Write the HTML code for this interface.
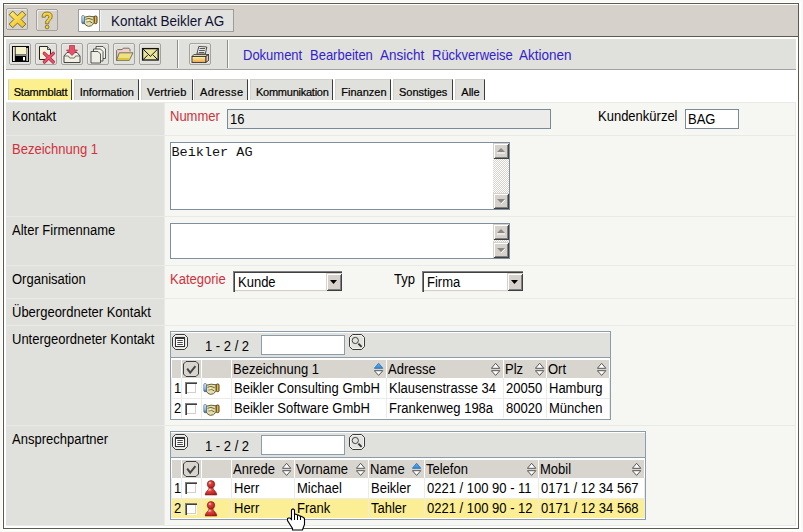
<!DOCTYPE html>
<html><head><meta charset="utf-8"><style>
html,body{margin:0;padding:0;}
body{width:803px;height:532px;position:relative;overflow:hidden;background:#f9f9f9;font-family:"Liberation Sans", sans-serif;}
div{box-sizing:content-box;}
</style></head><body>
<div style="position:absolute;left:2px;top:2px;width:799px;height:529px;background:#fff"></div>
<div style="position:absolute;left:3px;top:3px;width:794px;height:524px;border:1px solid #5d5b4b;background:#fff"></div>
<div style="position:absolute;left:4px;top:5px;width:794px;height:31px;background:#d6d2cb"></div>
<div style="position:absolute;left:4px;top:36px;width:794px;height:1px;background:#5d5b4b"></div>
<div style="position:absolute;left:6px;top:8px;width:20px;height:20px;border:1px solid #a4a29c;border-radius:2px;box-shadow:inset 1px 1px 0 #ecebe8"><svg width="22" height="22" style="position:absolute;left:-1px;top:-1px" viewBox="0 0 22 22"><defs><linearGradient id="xg" x1="0" y1="0" x2="1" y2="1"><stop offset="0" stop-color="#fcec70"/><stop offset="1" stop-color="#eec020"/></linearGradient></defs><path d="M3.2 6.7 L6.8 3.1 L11.5 7.8 L16.2 3.1 L19.8 6.7 L15.1 11.4 L19.8 16.1 L16.2 19.7 L11.5 15 L6.8 19.7 L3.2 16.1 L7.9 11.4 Z" fill="url(#xg)" stroke="#6a5a28" stroke-width="0.9" stroke-linejoin="round"/></svg></div>
<div style="position:absolute;left:36px;top:9px;width:20px;height:20px;border:1px solid #a4a29c;border-radius:2px;box-shadow:inset 1px 1px 0 #ecebe8"><svg width="22" height="22" style="position:absolute;left:-1px;top:-1px" viewBox="0 0 22 22"><path d="M6 8.2 Q6 3 11 3 Q16.2 3 16.2 7.5 Q16.2 10.3 13.6 11.8 Q12.7 12.4 12.7 14.8 L9.5 14.8 Q9.3 11.5 11.3 10.2 Q12.9 9.2 12.9 7.8 Q12.9 6.2 11 6.2 Q9.2 6.2 9.2 8.2 Z" fill="#f5d23a" stroke="#6e6330" stroke-width="0.8" stroke-linejoin="round"/><circle cx="11.1" cy="18" r="1.9" fill="#f5d23a" stroke="#6e6330" stroke-width="0.8"/></svg></div>
<div style="position:absolute;left:78px;top:9px;width:154px;height:21px;border:1px solid #9c9c9a;background:#e2e2e0"></div>
<div style="position:absolute;left:79px;top:10px;width:20px;height:21px;background:#fff;border-right:1px solid #9c9c9a"></div>
<div style="position:absolute;left:100px;top:10px;width:1px;height:21px;background:#f4f4f2"></div>
<div style="position:absolute;left:110.5px;top:12.96px;font-size:14.54px;line-height:17px;color:#101030;white-space:nowrap;transform:scaleX(0.9286);transform-origin:0 0;">Kontakt Beikler AG</div>
<div style="position:absolute;left:6px;top:39px;width:790px;height:30px;background:#e0e0dc;border-bottom:1px solid #a3a3a0"></div>
<div style="position:absolute;left:9px;top:43px;width:20px;height:20px;border:1px solid #a4a29c;border-radius:2px;box-shadow:inset 1px 1px 0 #ecebe8"><svg width="22" height="22" style="position:absolute;left:-1px;top:-1px" viewBox="0 0 22 22"><defs><linearGradient id="pg" x1="0" y1="0" x2="0" y2="1"><stop offset="0" stop-color="#fafaa0"/><stop offset="1" stop-color="#f0a050"/></linearGradient></defs><rect x="3" y="3" width="17" height="16" fill="#080808"/><rect x="4" y="4" width="1.8" height="14" fill="#efe6dc"/><rect x="17.4" y="5" width="1.4" height="13" fill="#efe6dc"/><rect x="6.6" y="4" width="10.4" height="7.4" fill="#f6f2c8"/><rect x="6.6" y="11.4" width="10.4" height="1.6" fill="#8a8a86"/><rect x="6.6" y="13" width="10.4" height="5" fill="#000"/><rect x="14" y="14" width="2" height="3.4" fill="#fff"/></svg></div>
<div style="position:absolute;left:35px;top:43px;width:20px;height:20px;border:1px solid #a4a29c;border-radius:2px;box-shadow:inset 1px 1px 0 #ecebe8"><svg width="22" height="22" style="position:absolute;left:-1px;top:-1px" viewBox="0 0 22 22"><defs><linearGradient id="pg" x1="0" y1="0" x2="0" y2="1"><stop offset="0" stop-color="#fafaa0"/><stop offset="1" stop-color="#f0a050"/></linearGradient></defs><path d="M4.5 3.5 H12.5 L15.5 6.5 V16.5 H4.5 Z" fill="#f4f2d8" stroke="#222" stroke-width="1"/><path d="M12.5 3.5 V6.5 H15.5" fill="#ccc" stroke="#222" stroke-width="0.8"/><path d="M9.3 10.3 L18.3 19 M18.3 10.3 L9.3 19" stroke="#a02030" stroke-width="3.2" stroke-linecap="round"/><path d="M9.3 10.3 L18.3 19 M18.3 10.3 L9.3 19" stroke="#f05070" stroke-width="2" stroke-linecap="round"/></svg></div>
<div style="position:absolute;left:61px;top:43px;width:20px;height:20px;border:1px solid #a4a29c;border-radius:2px;box-shadow:inset 1px 1px 0 #ecebe8"><svg width="22" height="22" style="position:absolute;left:-1px;top:-1px" viewBox="0 0 22 22"><defs><linearGradient id="pg" x1="0" y1="0" x2="0" y2="1"><stop offset="0" stop-color="#fafaa0"/><stop offset="1" stop-color="#f0a050"/></linearGradient></defs><path d="M3 13 L6 9.5 H16 L19 13 V19.5 H3 Z" fill="#f2f0e2" stroke="#333" stroke-width="0.9"/><path d="M3 13 H7.5 L8.5 15 H13.5 L14.5 13 H19" fill="none" stroke="#555" stroke-width="0.8"/><path d="M8.5 2.5 H13.5 V7 H16.5 L11 12.5 L5.5 7 H8.5 Z" fill="#e8506a" stroke="#a03040" stroke-width="0.7"/></svg></div>
<div style="position:absolute;left:87px;top:43px;width:20px;height:20px;border:1px solid #a4a29c;border-radius:2px;box-shadow:inset 1px 1px 0 #ecebe8"><svg width="22" height="22" style="position:absolute;left:-1px;top:-1px" viewBox="0 0 22 22"><defs><linearGradient id="pg" x1="0" y1="0" x2="0" y2="1"><stop offset="0" stop-color="#fafaa0"/><stop offset="1" stop-color="#f0a050"/></linearGradient></defs><path d="M9 3.5 H16 L18.5 6 V15.5 H9 Z" fill="#f2f2ea" stroke="#333" stroke-width="0.8"/><path d="M6.5 6 H13.5 L16 8.5 V18 H6.5 Z" fill="#f2f2ea" stroke="#333" stroke-width="0.8"/><path d="M4 8.5 H11 L13.5 11 V20 H4 Z" fill="#eeeee4" stroke="#333" stroke-width="0.8"/></svg></div>
<div style="position:absolute;left:113px;top:43px;width:20px;height:20px;border:1px solid #a4a29c;border-radius:2px;box-shadow:inset 1px 1px 0 #ecebe8"><svg width="22" height="22" style="position:absolute;left:-1px;top:-1px" viewBox="0 0 22 22"><defs><linearGradient id="pg" x1="0" y1="0" x2="0" y2="1"><stop offset="0" stop-color="#fafaa0"/><stop offset="1" stop-color="#f0a050"/></linearGradient></defs><path d="M3.6 17.5 V7.6 L4.6 6.6 H9.2 L10.2 5.2 H16 L17 6.6 V8.5" fill="#f2d0c8" stroke="#555" stroke-width="0.8"/><path d="M3.6 17.5 L6.2 9.8 H20 L16.2 17.5 Z" fill="#eee27e" stroke="#555" stroke-width="0.8"/><path d="M4.8 15.5 H16.8 M5.2 16.6 H16.3" stroke="#d8c440" stroke-width="1.2"/></svg></div>
<div style="position:absolute;left:139px;top:43px;width:20px;height:20px;border:1px solid #a4a29c;border-radius:2px;box-shadow:inset 1px 1px 0 #ecebe8"><svg width="22" height="22" style="position:absolute;left:-1px;top:-1px" viewBox="0 0 22 22"><defs><linearGradient id="pg" x1="0" y1="0" x2="0" y2="1"><stop offset="0" stop-color="#fafaa0"/><stop offset="1" stop-color="#f0a050"/></linearGradient></defs><rect x="3.6" y="5.6" width="15.6" height="11.4" fill="#e9e59c" stroke="#111" stroke-width="1.3"/><path d="M4.2 6.2 L11.4 13.3 L18.6 6.2 M4.2 16.6 L8.6 12.2 M18.6 16.6 L14.2 12.2" fill="none" stroke="#111" stroke-width="1"/></svg></div>
<div style="position:absolute;left:189px;top:43px;width:20px;height:20px;border:1px solid #a4a29c;border-radius:2px;box-shadow:inset 1px 1px 0 #ecebe8"><svg width="22" height="22" style="position:absolute;left:-1px;top:-1px" viewBox="0 0 22 22"><defs><linearGradient id="pg" x1="0" y1="0" x2="0" y2="1"><stop offset="0" stop-color="#fafaa0"/><stop offset="1" stop-color="#f0a050"/></linearGradient></defs><path d="M9.8 3.5 L17.8 4 L16.3 11 L7.9 11 Z" fill="#f8f8f8" stroke="#222" stroke-width="0.8"/><path d="M10.5 5.6 H16.2 M10.1 7.6 H15.8 M9.7 9.6 H15.4" stroke="#333" stroke-width="0.9"/><path d="M3 13.4 L5 11.5 H19.5 L16.8 13.4 Z" fill="#e8e0c8" stroke="#222" stroke-width="0.7"/><path d="M16.8 13.4 L19.5 11.5 V17.5 L16.8 19.4 Z" fill="#e8c0b8" stroke="#222" stroke-width="0.8"/><rect x="3" y="13.4" width="13.8" height="6" fill="url(#pg)" stroke="#222" stroke-width="0.8"/></svg></div>
<div style="position:absolute;left:177px;top:40px;width:1px;height:28px;background:#8e8e8a"></div>
<div style="position:absolute;left:178px;top:40px;width:1px;height:28px;background:#fbfbfa"></div>
<div style="position:absolute;left:227px;top:40px;width:1px;height:28px;background:#8e8e8a"></div>
<div style="position:absolute;left:228px;top:40px;width:1px;height:28px;background:#fbfbfa"></div>
<div style="position:absolute;left:242.5px;top:46.68px;font-size:14.20px;line-height:16px;color:#3322cc;white-space:nowrap;transform:scaleX(0.9155);transform-origin:0 0;">Dokument</div>
<div style="position:absolute;left:309.6px;top:46.68px;font-size:14.20px;line-height:16px;color:#3322cc;white-space:nowrap;transform:scaleX(0.9155);transform-origin:0 0;">Bearbeiten</div>
<div style="position:absolute;left:380px;top:46.68px;font-size:14.20px;line-height:16px;color:#3322cc;white-space:nowrap;transform:scaleX(0.9507);transform-origin:0 0;">Ansicht</div>
<div style="position:absolute;left:431.5px;top:46.68px;font-size:14.20px;line-height:16px;color:#3322cc;white-space:nowrap;transform:scaleX(0.9155);transform-origin:0 0;">R&uuml;ckverweise</div>
<div style="position:absolute;left:519px;top:46.68px;font-size:14.20px;line-height:16px;color:#3322cc;white-space:nowrap;transform:scaleX(0.9507);transform-origin:0 0;">Aktionen</div>
<div style="position:absolute;left:8px;top:79px;width:62px;height:20px;background:#fbef8e;border-top:1px solid #fbef8e;border-left:1px solid #d4d2cc;border-right:1px solid #3c3c3c"></div>
<div style="position:absolute;left:13.7px;top:85.69px;font-size:11.00px;line-height:13px;color:#000;white-space:nowrap;letter-spacing:-0.2px;-webkit-text-stroke:0.2px #000">Stammblatt</div>
<div style="position:absolute;left:74px;top:79px;width:63px;height:20px;background:#e0e0dc;border-top:1px solid #d2d0ca;border-left:1px solid #d4d2cc;border-right:1px solid #3c3c3c"></div>
<div style="position:absolute;left:79.8px;top:85.69px;font-size:11.00px;line-height:13px;color:#000;white-space:nowrap;letter-spacing:-0.1px;-webkit-text-stroke:0.2px #000">Information</div>
<div style="position:absolute;left:141px;top:79px;width:50px;height:20px;background:#e0e0dc;border-top:1px solid #d2d0ca;border-left:1px solid #d4d2cc;border-right:1px solid #3c3c3c"></div>
<div style="position:absolute;left:147px;top:85.69px;font-size:11.00px;line-height:13px;color:#000;white-space:nowrap;letter-spacing:0.2px;-webkit-text-stroke:0.2px #000">Vertrieb</div>
<div style="position:absolute;left:194px;top:79px;width:52px;height:20px;background:#e0e0dc;border-top:1px solid #d2d0ca;border-left:1px solid #d4d2cc;border-right:1px solid #3c3c3c"></div>
<div style="position:absolute;left:200px;top:85.69px;font-size:11.00px;line-height:13px;color:#000;white-space:nowrap;letter-spacing:0.45px;-webkit-text-stroke:0.2px #000">Adresse</div>
<div style="position:absolute;left:250px;top:79px;width:81px;height:20px;background:#e0e0dc;border-top:1px solid #d2d0ca;border-left:1px solid #d4d2cc;border-right:1px solid #3c3c3c"></div>
<div style="position:absolute;left:256px;top:85.69px;font-size:11.00px;line-height:13px;color:#000;white-space:nowrap;letter-spacing:-0.25px;-webkit-text-stroke:0.2px #000">Kommunikation</div>
<div style="position:absolute;left:335px;top:79px;width:54px;height:20px;background:#e0e0dc;border-top:1px solid #d2d0ca;border-left:1px solid #d4d2cc;border-right:1px solid #3c3c3c"></div>
<div style="position:absolute;left:341.3px;top:85.69px;font-size:11.00px;line-height:13px;color:#000;white-space:nowrap;letter-spacing:0px;-webkit-text-stroke:0.2px #000">Finanzen</div>
<div style="position:absolute;left:393px;top:79px;width:58px;height:20px;background:#e0e0dc;border-top:1px solid #d2d0ca;border-left:1px solid #d4d2cc;border-right:1px solid #3c3c3c"></div>
<div style="position:absolute;left:399px;top:85.69px;font-size:11.00px;line-height:13px;color:#000;white-space:nowrap;letter-spacing:0px;-webkit-text-stroke:0.2px #000">Sonstiges</div>
<div style="position:absolute;left:455px;top:79px;width:28px;height:20px;background:#e0e0dc;border-top:1px solid #d2d0ca;border-left:1px solid #d4d2cc;border-right:1px solid #3c3c3c"></div>
<div style="position:absolute;left:461.3px;top:85.69px;font-size:11.00px;line-height:13px;color:#000;white-space:nowrap;letter-spacing:0px;-webkit-text-stroke:0.2px #000">Alle</div>
<div style="position:absolute;left:6px;top:102px;width:790px;height:424px;background:#e9e9e5"></div>
<div style="position:absolute;left:6px;top:103px;width:158px;height:32px;background:#e0e0dc"></div>
<div style="position:absolute;left:165px;top:103px;width:630px;height:32px;background:#f6f6f2"></div>
<div style="position:absolute;left:6px;top:136px;width:158px;height:80px;background:#e0e0dc"></div>
<div style="position:absolute;left:165px;top:136px;width:630px;height:80px;background:#f6f6f2"></div>
<div style="position:absolute;left:6px;top:217px;width:158px;height:48px;background:#e0e0dc"></div>
<div style="position:absolute;left:165px;top:217px;width:630px;height:48px;background:#f6f6f2"></div>
<div style="position:absolute;left:6px;top:266px;width:158px;height:32px;background:#e0e0dc"></div>
<div style="position:absolute;left:165px;top:266px;width:630px;height:32px;background:#f6f6f2"></div>
<div style="position:absolute;left:6px;top:299px;width:158px;height:26px;background:#e0e0dc"></div>
<div style="position:absolute;left:165px;top:299px;width:630px;height:26px;background:#f6f6f2"></div>
<div style="position:absolute;left:6px;top:326px;width:158px;height:99px;background:#e0e0dc"></div>
<div style="position:absolute;left:165px;top:326px;width:630px;height:99px;background:#f6f6f2"></div>
<div style="position:absolute;left:6px;top:426px;width:158px;height:99px;background:#e0e0dc"></div>
<div style="position:absolute;left:165px;top:426px;width:630px;height:99px;background:#f6f6f2"></div>
<div style="position:absolute;left:12px;top:108.15px;font-size:14.00px;line-height:16px;color:#000;white-space:nowrap;transform:scaleX(0.9286);transform-origin:0 0;">Kontakt</div>
<div style="position:absolute;left:12px;top:141.15px;font-size:14.00px;line-height:16px;color:#d0323c;white-space:nowrap;transform:scaleX(0.9286);transform-origin:0 0;">Bezeichnung 1</div>
<div style="position:absolute;left:12px;top:222.15px;font-size:14.00px;line-height:16px;color:#000;white-space:nowrap;transform:scaleX(0.9286);transform-origin:0 0;">Alter Firmenname</div>
<div style="position:absolute;left:12px;top:271.15px;font-size:14.00px;line-height:16px;color:#000;white-space:nowrap;transform:scaleX(0.9286);transform-origin:0 0;">Organisation</div>
<div style="position:absolute;left:12px;top:304.15px;font-size:14.00px;line-height:16px;color:#000;white-space:nowrap;transform:scaleX(0.9286);transform-origin:0 0;">&Uuml;bergeordneter Kontakt</div>
<div style="position:absolute;left:12px;top:331.15px;font-size:14.00px;line-height:16px;color:#000;white-space:nowrap;transform:scaleX(0.9286);transform-origin:0 0;">Untergeordneter Kontakt</div>
<div style="position:absolute;left:12px;top:431.15px;font-size:14.00px;line-height:16px;color:#000;white-space:nowrap;transform:scaleX(0.9286);transform-origin:0 0;">Ansprechpartner</div>
<div style="position:absolute;left:170.3px;top:108.15px;font-size:14.00px;line-height:16px;color:#d0323c;white-space:nowrap;transform:scaleX(0.9286);transform-origin:0 0;">Nummer</div>
<div style="position:absolute;left:227px;top:109px;width:322px;height:18px;border:1px solid #7b8a99;background:#ececea"></div>
<div style="position:absolute;left:230px;top:111.15px;font-size:14.00px;line-height:16px;color:#000;white-space:nowrap;transform:scaleX(0.9286);transform-origin:0 0;">16</div>
<div style="position:absolute;left:598px;top:108.15px;font-size:14.00px;line-height:16px;color:#000;white-space:nowrap;transform:scaleX(0.9286);transform-origin:0 0;">Kundenk&uuml;rzel</div>
<div style="position:absolute;left:685px;top:109px;width:52px;height:18px;border:1px solid #7b8a99;background:#fff"></div>
<div style="position:absolute;left:688px;top:111.15px;font-size:14.00px;line-height:16px;color:#000;white-space:nowrap;transform:scaleX(0.9286);transform-origin:0 0;">BAG</div>
<div style="position:absolute;left:170px;top:142px;width:338px;height:66px;border:1px solid #7f8f9f;background:#fff"></div>
<div style="position:absolute;left:493px;top:143px;width:16px;height:66px;background-color:#eae8e4;background-image:repeating-conic-gradient(#d6d2cb 0 25%, #fff 0 50%);background-size:2px 2px"></div>
<div style="position:absolute;left:493px;top:143px;width:16px;height:16px;background:#d6d2cb;box-shadow:inset 1px 1px 0 #d6d2cb, inset -1px -1px 0 #404040, inset 2px 2px 0 #fff, inset -2px -2px 0 #808080"><svg width="16" height="16" style="position:absolute;left:0;top:0"><path d="M4 9 L8 5 L12 9 Z" fill="#8a8884"/><path d="M4 10 H12" stroke="#fff"/></svg></div>
<div style="position:absolute;left:493px;top:193px;width:16px;height:16px;background:#d6d2cb;box-shadow:inset 1px 1px 0 #d6d2cb, inset -1px -1px 0 #404040, inset 2px 2px 0 #fff, inset -2px -2px 0 #808080"><svg width="16" height="16" style="position:absolute;left:0;top:0"><path d="M4 6 L8 10 L12 6 Z" fill="#8a8884"/><path d="M8 11 L12 7" stroke="#fff"/></svg></div>
<div style="position:absolute;left:171.5px;top:145.20px;font-family:'Liberation Mono',monospace;font-size:13.5px;line-height:16px;color:#111;white-space:nowrap">Beikler AG</div>
<div style="position:absolute;left:170px;top:223px;width:338px;height:34px;border:1px solid #7f8f9f;background:#fff"></div>
<div style="position:absolute;left:493px;top:224px;width:16px;height:34px;background-color:#eae8e4;background-image:repeating-conic-gradient(#d6d2cb 0 25%, #fff 0 50%);background-size:2px 2px"></div>
<div style="position:absolute;left:493px;top:224px;width:16px;height:16px;background:#d6d2cb;box-shadow:inset 1px 1px 0 #d6d2cb, inset -1px -1px 0 #404040, inset 2px 2px 0 #fff, inset -2px -2px 0 #808080"><svg width="16" height="16" style="position:absolute;left:0;top:0"><path d="M4 9 L8 5 L12 9 Z" fill="#8a8884"/><path d="M4 10 H12" stroke="#fff"/></svg></div>
<div style="position:absolute;left:493px;top:242px;width:16px;height:16px;background:#d6d2cb;box-shadow:inset 1px 1px 0 #d6d2cb, inset -1px -1px 0 #404040, inset 2px 2px 0 #fff, inset -2px -2px 0 #808080"><svg width="16" height="16" style="position:absolute;left:0;top:0"><path d="M4 6 L8 10 L12 6 Z" fill="#8a8884"/><path d="M8 11 L12 7" stroke="#fff"/></svg></div>
<div style="position:absolute;left:170px;top:271.15px;font-size:14.00px;line-height:16px;color:#d0323c;white-space:nowrap;transform:scaleX(0.9286);transform-origin:0 0;">Kategorie</div>
<div style="position:absolute;left:233px;top:271px;width:109px;height:21px;background:#fff;box-shadow:inset 1px 1px 0 #808080, inset 2px 2px 0 #404040, inset 0 -1px 0 #f2f2f0, inset 0 -2px 0 #d4d0c8"></div>
<div style="position:absolute;left:326px;top:273px;width:16px;height:18px;background:#d6d2cb;box-shadow:inset 1px 1px 0 #d6d2cb, inset -1px -1px 0 #404040, inset 2px 2px 0 #fff, inset -2px -2px 0 #808080"><svg width="16" height="19" style="position:absolute;left:0;top:0"><path d="M4 7 L11 7 L7.5 11 Z" fill="#000"/></svg></div>
<div style="position:absolute;left:238px;top:274.15px;font-size:14.00px;line-height:16px;color:#000;white-space:nowrap;transform:scaleX(0.9286);transform-origin:0 0;">Kunde</div>
<div style="position:absolute;left:393.5px;top:271.15px;font-size:14.00px;line-height:16px;color:#000;white-space:nowrap;transform:scaleX(0.9286);transform-origin:0 0;">Typ</div>
<div style="position:absolute;left:422px;top:271px;width:101px;height:21px;background:#fff;box-shadow:inset 1px 1px 0 #808080, inset 2px 2px 0 #404040, inset 0 -1px 0 #f2f2f0, inset 0 -2px 0 #d4d0c8"></div>
<div style="position:absolute;left:507px;top:273px;width:16px;height:18px;background:#d6d2cb;box-shadow:inset 1px 1px 0 #d6d2cb, inset -1px -1px 0 #404040, inset 2px 2px 0 #fff, inset -2px -2px 0 #808080"><svg width="16" height="19" style="position:absolute;left:0;top:0"><path d="M4 7 L11 7 L7.5 11 Z" fill="#000"/></svg></div>
<div style="position:absolute;left:427px;top:274.15px;font-size:14.00px;line-height:16px;color:#000;white-space:nowrap;transform:scaleX(0.9286);transform-origin:0 0;">Firma</div>
<div style="position:absolute;left:80.5px;top:14.5px;line-height:0"><svg width="17" height="12" viewBox="0 0 17 12"><defs><linearGradient id="hb" x1="0" y1="0" x2="0" y2="1"><stop offset="0" stop-color="#e0f4ff"/><stop offset="0.65" stop-color="#88c4f0"/><stop offset="1" stop-color="#3060b8"/></linearGradient></defs><path d="M3 2.3 Q8 0.3 13.2 1.8 L13.4 7.8 Q10.5 11.8 7.5 11.4 Q4.5 11 3 7.8 Z" fill="#e4deae" stroke="#55502a" stroke-width="0.9"/><path d="M4.5 4.3 Q8 2.3 11.8 4.8 M5.5 7 Q8.5 5.3 11.5 8" stroke="#6e6630" stroke-width="1" fill="none"/><circle cx="7" cy="5.5" r="1" fill="#f8f4c0"/><rect x="0.8" y="0.5" width="2.6" height="8.2" rx="1.1" fill="url(#hb)" stroke="#404a70" stroke-width="0.6"/><rect x="13.2" y="1" width="2.8" height="7.6" rx="1.1" fill="#eab444" stroke="#3a3010" stroke-width="0.9"/></svg></div>
<div style="position:absolute;left:170px;top:331px;width:439px;height:87px;border:1px solid #8d9cab;background:#fff"></div>
<div style="position:absolute;left:171px;top:333px;width:439px;height:24px;background:#e0e0dc;border-bottom:1px solid #8d9cab"></div>
<svg style="position:absolute;left:172px;top:334px" width="16" height="16" viewBox="0 0 16 16"><path d="M3.5 0.5 H12.5 L15.5 3.5 V12.5 L12.5 15.5 H3.5 L0.5 12.5 V3.5 Z" fill="#e2e2de" stroke="#3c3c3c" stroke-width="1"/><path d="M3.9 1.5 H12.1 L14.5 3.9 V12.1 L12.1 14.5 H3.9 L1.5 12.1 V3.9 Z" fill="none" stroke="#f4f4f2" stroke-width="0.9"/><rect x="3.5" y="3.5" width="9" height="9" fill="#fff" stroke="#333" stroke-width="1"/><rect x="3" y="3" width="10" height="2" fill="#333"/><path d="M5.3 6.5 H10.8 M5.3 8.5 H10.8 M5.3 10.5 H10.8" stroke="#333" stroke-width="0.9"/></svg>
<div style="position:absolute;left:204.8px;top:338.15px;font-size:14.00px;line-height:16px;color:#000;white-space:nowrap;transform:scaleX(0.9286);transform-origin:0 0;">1 - 2 / 2</div>
<div style="position:absolute;left:261px;top:335px;width:82px;height:18px;border:1px solid #8d9cab;background:#fff"></div>
<svg style="position:absolute;left:349px;top:334px" width="16" height="16" viewBox="0 0 16 16"><path d="M3.5 0.5 H12.5 L15.5 3.5 V12.5 L12.5 15.5 H3.5 L0.5 12.5 V3.5 Z" fill="#e2e2de" stroke="#3c3c3c" stroke-width="1"/><path d="M3.9 1.5 H12.1 L14.5 3.9 V12.1 L12.1 14.5 H3.9 L1.5 12.1 V3.9 Z" fill="none" stroke="#f4f4f2" stroke-width="0.9"/><circle cx="6.3" cy="6.5" r="3.1" fill="none" stroke="#333" stroke-width="0.9"/><path d="M9.4 9.6 L12.6 12.8" stroke="#333" stroke-width="1.9"/></svg>
<div style="position:absolute;left:171px;top:359px;width:439px;height:19px;background:#fff"></div>
<div style="position:absolute;left:172px;top:360px;width:9px;height:18px;background:#d8d4ce"></div>
<div style="position:absolute;left:182px;top:360px;width:19px;height:18px;background:#d8d4ce"></div>
<div style="position:absolute;left:202px;top:360px;width:29px;height:18px;background:#d8d4ce"></div>
<div style="position:absolute;left:232px;top:360px;width:154px;height:18px;background:#d8d4ce"></div>
<div style="position:absolute;left:232.8px;top:360.65px;font-size:14.00px;line-height:16px;color:#000;white-space:nowrap;transform:scaleX(0.9286);transform-origin:0 0;">Bezeichnung 1</div>
<svg style="position:absolute;left:374px;top:362px" width="11" height="15" viewBox="0 0 11 15"><defs><linearGradient id="sg" x1="0" y1="0" x2="0" y2="1"><stop offset="0" stop-color="#60b8f8"/><stop offset="1" stop-color="#2a88e0"/></linearGradient></defs><path d="M0.4 6.3 L4.6 1.3 L8.8 6.3 Z" fill="url(#sg)" stroke="#3a78b8" stroke-width="1" stroke-linejoin="round"/><path d="M0.4 8.7 L4.6 13.4 L8.8 8.7 Z" fill="#fff" stroke="#555" stroke-width="1" stroke-linejoin="round"/></svg>
<div style="position:absolute;left:387px;top:360px;width:116px;height:18px;background:#d8d4ce"></div>
<div style="position:absolute;left:387.8px;top:360.65px;font-size:14.00px;line-height:16px;color:#000;white-space:nowrap;transform:scaleX(0.9286);transform-origin:0 0;">Adresse</div>
<svg style="position:absolute;left:491px;top:362px" width="11" height="15" viewBox="0 0 11 15"><defs><linearGradient id="sg" x1="0" y1="0" x2="0" y2="1"><stop offset="0" stop-color="#60b8f8"/><stop offset="1" stop-color="#2a88e0"/></linearGradient></defs><path d="M0.4 6.3 L4.6 1.3 L8.8 6.3 Z" fill="#fff" stroke="#555" stroke-width="1" stroke-linejoin="round"/><path d="M0.4 8.7 L4.6 13.4 L8.8 8.7 Z" fill="#fff" stroke="#555" stroke-width="1" stroke-linejoin="round"/></svg>
<div style="position:absolute;left:504px;top:360px;width:42px;height:18px;background:#d8d4ce"></div>
<div style="position:absolute;left:504.8px;top:360.65px;font-size:14.00px;line-height:16px;color:#000;white-space:nowrap;transform:scaleX(0.9286);transform-origin:0 0;">Plz</div>
<svg style="position:absolute;left:535px;top:362px" width="11" height="15" viewBox="0 0 11 15"><defs><linearGradient id="sg" x1="0" y1="0" x2="0" y2="1"><stop offset="0" stop-color="#60b8f8"/><stop offset="1" stop-color="#2a88e0"/></linearGradient></defs><path d="M0.4 6.3 L4.6 1.3 L8.8 6.3 Z" fill="#fff" stroke="#555" stroke-width="1" stroke-linejoin="round"/><path d="M0.4 8.7 L4.6 13.4 L8.8 8.7 Z" fill="#fff" stroke="#555" stroke-width="1" stroke-linejoin="round"/></svg>
<div style="position:absolute;left:547px;top:360px;width:62px;height:18px;background:#d8d4ce"></div>
<div style="position:absolute;left:547.8px;top:360.65px;font-size:14.00px;line-height:16px;color:#000;white-space:nowrap;transform:scaleX(0.9286);transform-origin:0 0;">Ort</div>
<svg style="position:absolute;left:597px;top:362px" width="11" height="15" viewBox="0 0 11 15"><defs><linearGradient id="sg" x1="0" y1="0" x2="0" y2="1"><stop offset="0" stop-color="#60b8f8"/><stop offset="1" stop-color="#2a88e0"/></linearGradient></defs><path d="M0.4 6.3 L4.6 1.3 L8.8 6.3 Z" fill="#fff" stroke="#555" stroke-width="1" stroke-linejoin="round"/><path d="M0.4 8.7 L4.6 13.4 L8.8 8.7 Z" fill="#fff" stroke="#555" stroke-width="1" stroke-linejoin="round"/></svg>
<svg style="position:absolute;left:183px;top:361px" width="16" height="16" viewBox="0 0 16 16"><path d="M3 0.5 H13 L15.5 3 V13 L13 15.5 H3 L0.5 13 V3 Z" fill="#d8d4ce" stroke="#3c3c3c" stroke-width="1"/><path d="M4.2 7.6 L7.2 11.6 L12.4 5.2" fill="none" stroke="#444" stroke-width="1.9"/></svg>
<div style="position:absolute;left:171px;top:378px;width:439px;height:21px;background:#ebebea"></div>
<div style="position:absolute;left:172px;top:378px;width:9px;height:20px;background:#fff"></div>
<div style="position:absolute;left:182px;top:378px;width:19px;height:20px;background:#fff"></div>
<div style="position:absolute;left:202px;top:378px;width:29px;height:20px;background:#fff"></div>
<div style="position:absolute;left:232px;top:378px;width:154px;height:20px;background:#fff"></div>
<div style="position:absolute;left:387px;top:378px;width:116px;height:20px;background:#fff"></div>
<div style="position:absolute;left:504px;top:378px;width:42px;height:20px;background:#fff"></div>
<div style="position:absolute;left:547px;top:378px;width:62px;height:20px;background:#fff"></div>
<div style="position:absolute;left:174px;top:380.15px;font-size:14.00px;line-height:16px;color:#000;white-space:nowrap;transform:scaleX(0.9286);transform-origin:0 0;">1</div>
<div style="position:absolute;left:185px;top:382px;width:12px;height:12px;background:#fff;box-shadow:inset 1px 1px 0 #808080, inset 2px 2px 0 #404040, inset -1px -1px 0 #fff, inset -2px -2px 0 #d4d0c8"></div>
<div style="position:absolute;left:203px;top:383px;line-height:0"><svg width="17" height="12" viewBox="0 0 17 12"><defs><linearGradient id="hb" x1="0" y1="0" x2="0" y2="1"><stop offset="0" stop-color="#e0f4ff"/><stop offset="0.65" stop-color="#88c4f0"/><stop offset="1" stop-color="#3060b8"/></linearGradient></defs><path d="M3 2.3 Q8 0.3 13.2 1.8 L13.4 7.8 Q10.5 11.8 7.5 11.4 Q4.5 11 3 7.8 Z" fill="#e4deae" stroke="#55502a" stroke-width="0.9"/><path d="M4.5 4.3 Q8 2.3 11.8 4.8 M5.5 7 Q8.5 5.3 11.5 8" stroke="#6e6630" stroke-width="1" fill="none"/><circle cx="7" cy="5.5" r="1" fill="#f8f4c0"/><rect x="0.8" y="0.5" width="2.6" height="8.2" rx="1.1" fill="url(#hb)" stroke="#404a70" stroke-width="0.6"/><rect x="13.2" y="1" width="2.8" height="7.6" rx="1.1" fill="#eab444" stroke="#3a3010" stroke-width="0.9"/></svg></div>
<div style="position:absolute;left:234.4px;top:380.15px;font-size:14.00px;line-height:16px;color:#000;white-space:nowrap;transform:scaleX(0.9286);transform-origin:0 0;">Beikler Consulting GmbH</div>
<div style="position:absolute;left:389.4px;top:380.15px;font-size:14.00px;line-height:16px;color:#000;white-space:nowrap;transform:scaleX(0.9286);transform-origin:0 0;">Klausenstrasse 34</div>
<div style="position:absolute;left:506.4px;top:380.15px;font-size:14.00px;line-height:16px;color:#000;white-space:nowrap;transform:scaleX(0.9286);transform-origin:0 0;">20050</div>
<div style="position:absolute;left:549.4px;top:380.15px;font-size:14.00px;line-height:16px;color:#000;white-space:nowrap;transform:scaleX(0.9286);transform-origin:0 0;">Hamburg</div>
<div style="position:absolute;left:171px;top:399px;width:439px;height:19px;background:#ebebea"></div>
<div style="position:absolute;left:172px;top:399px;width:9px;height:19px;background:#fff"></div>
<div style="position:absolute;left:182px;top:399px;width:19px;height:19px;background:#fff"></div>
<div style="position:absolute;left:202px;top:399px;width:29px;height:19px;background:#fff"></div>
<div style="position:absolute;left:232px;top:399px;width:154px;height:19px;background:#fff"></div>
<div style="position:absolute;left:387px;top:399px;width:116px;height:19px;background:#fff"></div>
<div style="position:absolute;left:504px;top:399px;width:42px;height:19px;background:#fff"></div>
<div style="position:absolute;left:547px;top:399px;width:62px;height:19px;background:#fff"></div>
<div style="position:absolute;left:174px;top:400.15px;font-size:14.00px;line-height:16px;color:#000;white-space:nowrap;transform:scaleX(0.9286);transform-origin:0 0;">2</div>
<div style="position:absolute;left:185px;top:403px;width:12px;height:12px;background:#fff;box-shadow:inset 1px 1px 0 #808080, inset 2px 2px 0 #404040, inset -1px -1px 0 #fff, inset -2px -2px 0 #d4d0c8"></div>
<div style="position:absolute;left:203px;top:404px;line-height:0"><svg width="17" height="12" viewBox="0 0 17 12"><defs><linearGradient id="hb" x1="0" y1="0" x2="0" y2="1"><stop offset="0" stop-color="#e0f4ff"/><stop offset="0.65" stop-color="#88c4f0"/><stop offset="1" stop-color="#3060b8"/></linearGradient></defs><path d="M3 2.3 Q8 0.3 13.2 1.8 L13.4 7.8 Q10.5 11.8 7.5 11.4 Q4.5 11 3 7.8 Z" fill="#e4deae" stroke="#55502a" stroke-width="0.9"/><path d="M4.5 4.3 Q8 2.3 11.8 4.8 M5.5 7 Q8.5 5.3 11.5 8" stroke="#6e6630" stroke-width="1" fill="none"/><circle cx="7" cy="5.5" r="1" fill="#f8f4c0"/><rect x="0.8" y="0.5" width="2.6" height="8.2" rx="1.1" fill="url(#hb)" stroke="#404a70" stroke-width="0.6"/><rect x="13.2" y="1" width="2.8" height="7.6" rx="1.1" fill="#eab444" stroke="#3a3010" stroke-width="0.9"/></svg></div>
<div style="position:absolute;left:234.4px;top:400.15px;font-size:14.00px;line-height:16px;color:#000;white-space:nowrap;transform:scaleX(0.9286);transform-origin:0 0;">Beikler Software GmbH</div>
<div style="position:absolute;left:389.4px;top:400.15px;font-size:14.00px;line-height:16px;color:#000;white-space:nowrap;transform:scaleX(0.9286);transform-origin:0 0;">Frankenweg 198a</div>
<div style="position:absolute;left:506.4px;top:400.15px;font-size:14.00px;line-height:16px;color:#000;white-space:nowrap;transform:scaleX(0.9286);transform-origin:0 0;">80020</div>
<div style="position:absolute;left:549.4px;top:400.15px;font-size:14.00px;line-height:16px;color:#000;white-space:nowrap;transform:scaleX(0.9286);transform-origin:0 0;">M&uuml;nchen</div>
<div style="position:absolute;left:170px;top:431px;width:474px;height:87px;border:1px solid #8d9cab;background:#fff"></div>
<div style="position:absolute;left:171px;top:433px;width:474px;height:24px;background:#e0e0dc;border-bottom:1px solid #8d9cab"></div>
<svg style="position:absolute;left:172px;top:434px" width="16" height="16" viewBox="0 0 16 16"><path d="M3.5 0.5 H12.5 L15.5 3.5 V12.5 L12.5 15.5 H3.5 L0.5 12.5 V3.5 Z" fill="#e2e2de" stroke="#3c3c3c" stroke-width="1"/><path d="M3.9 1.5 H12.1 L14.5 3.9 V12.1 L12.1 14.5 H3.9 L1.5 12.1 V3.9 Z" fill="none" stroke="#f4f4f2" stroke-width="0.9"/><rect x="3.5" y="3.5" width="9" height="9" fill="#fff" stroke="#333" stroke-width="1"/><rect x="3" y="3" width="10" height="2" fill="#333"/><path d="M5.3 6.5 H10.8 M5.3 8.5 H10.8 M5.3 10.5 H10.8" stroke="#333" stroke-width="0.9"/></svg>
<div style="position:absolute;left:204.8px;top:438.15px;font-size:14.00px;line-height:16px;color:#000;white-space:nowrap;transform:scaleX(0.9286);transform-origin:0 0;">1 - 2 / 2</div>
<div style="position:absolute;left:261px;top:435px;width:82px;height:18px;border:1px solid #8d9cab;background:#fff"></div>
<svg style="position:absolute;left:349px;top:434px" width="16" height="16" viewBox="0 0 16 16"><path d="M3.5 0.5 H12.5 L15.5 3.5 V12.5 L12.5 15.5 H3.5 L0.5 12.5 V3.5 Z" fill="#e2e2de" stroke="#3c3c3c" stroke-width="1"/><path d="M3.9 1.5 H12.1 L14.5 3.9 V12.1 L12.1 14.5 H3.9 L1.5 12.1 V3.9 Z" fill="none" stroke="#f4f4f2" stroke-width="0.9"/><circle cx="6.3" cy="6.5" r="3.1" fill="none" stroke="#333" stroke-width="0.9"/><path d="M9.4 9.6 L12.6 12.8" stroke="#333" stroke-width="1.9"/></svg>
<div style="position:absolute;left:171px;top:459px;width:474px;height:19px;background:#fff"></div>
<div style="position:absolute;left:172px;top:460px;width:9px;height:18px;background:#d8d4ce"></div>
<div style="position:absolute;left:182px;top:460px;width:19px;height:18px;background:#d8d4ce"></div>
<div style="position:absolute;left:202px;top:460px;width:29px;height:18px;background:#d8d4ce"></div>
<div style="position:absolute;left:232px;top:460px;width:62px;height:18px;background:#d8d4ce"></div>
<div style="position:absolute;left:232.8px;top:460.65px;font-size:14.00px;line-height:16px;color:#000;white-space:nowrap;transform:scaleX(0.9286);transform-origin:0 0;">Anrede</div>
<svg style="position:absolute;left:282px;top:462px" width="11" height="15" viewBox="0 0 11 15"><defs><linearGradient id="sg" x1="0" y1="0" x2="0" y2="1"><stop offset="0" stop-color="#60b8f8"/><stop offset="1" stop-color="#2a88e0"/></linearGradient></defs><path d="M0.4 6.3 L4.6 1.3 L8.8 6.3 Z" fill="#fff" stroke="#555" stroke-width="1" stroke-linejoin="round"/><path d="M0.4 8.7 L4.6 13.4 L8.8 8.7 Z" fill="#fff" stroke="#555" stroke-width="1" stroke-linejoin="round"/></svg>
<div style="position:absolute;left:295px;top:460px;width:73px;height:18px;background:#d8d4ce"></div>
<div style="position:absolute;left:295.8px;top:460.65px;font-size:14.00px;line-height:16px;color:#000;white-space:nowrap;transform:scaleX(0.9286);transform-origin:0 0;">Vorname</div>
<svg style="position:absolute;left:356px;top:462px" width="11" height="15" viewBox="0 0 11 15"><defs><linearGradient id="sg" x1="0" y1="0" x2="0" y2="1"><stop offset="0" stop-color="#60b8f8"/><stop offset="1" stop-color="#2a88e0"/></linearGradient></defs><path d="M0.4 6.3 L4.6 1.3 L8.8 6.3 Z" fill="#fff" stroke="#555" stroke-width="1" stroke-linejoin="round"/><path d="M0.4 8.7 L4.6 13.4 L8.8 8.7 Z" fill="#fff" stroke="#555" stroke-width="1" stroke-linejoin="round"/></svg>
<div style="position:absolute;left:369px;top:460px;width:55px;height:18px;background:#d8d4ce"></div>
<div style="position:absolute;left:369.8px;top:460.65px;font-size:14.00px;line-height:16px;color:#000;white-space:nowrap;transform:scaleX(0.9286);transform-origin:0 0;">Name</div>
<svg style="position:absolute;left:412px;top:462px" width="11" height="15" viewBox="0 0 11 15"><defs><linearGradient id="sg" x1="0" y1="0" x2="0" y2="1"><stop offset="0" stop-color="#60b8f8"/><stop offset="1" stop-color="#2a88e0"/></linearGradient></defs><path d="M0.4 6.3 L4.6 1.3 L8.8 6.3 Z" fill="url(#sg)" stroke="#3a78b8" stroke-width="1" stroke-linejoin="round"/><path d="M0.4 8.7 L4.6 13.4 L8.8 8.7 Z" fill="#fff" stroke="#555" stroke-width="1" stroke-linejoin="round"/></svg>
<div style="position:absolute;left:425px;top:460px;width:113px;height:18px;background:#d8d4ce"></div>
<div style="position:absolute;left:425.8px;top:460.65px;font-size:14.00px;line-height:16px;color:#000;white-space:nowrap;transform:scaleX(0.9286);transform-origin:0 0;">Telefon</div>
<svg style="position:absolute;left:527px;top:462px" width="11" height="15" viewBox="0 0 11 15"><defs><linearGradient id="sg" x1="0" y1="0" x2="0" y2="1"><stop offset="0" stop-color="#60b8f8"/><stop offset="1" stop-color="#2a88e0"/></linearGradient></defs><path d="M0.4 6.3 L4.6 1.3 L8.8 6.3 Z" fill="#fff" stroke="#555" stroke-width="1" stroke-linejoin="round"/><path d="M0.4 8.7 L4.6 13.4 L8.8 8.7 Z" fill="#fff" stroke="#555" stroke-width="1" stroke-linejoin="round"/></svg>
<div style="position:absolute;left:539px;top:460px;width:105px;height:18px;background:#d8d4ce"></div>
<div style="position:absolute;left:539.8px;top:460.65px;font-size:14.00px;line-height:16px;color:#000;white-space:nowrap;transform:scaleX(0.9286);transform-origin:0 0;">Mobil</div>
<svg style="position:absolute;left:632px;top:462px" width="11" height="15" viewBox="0 0 11 15"><defs><linearGradient id="sg" x1="0" y1="0" x2="0" y2="1"><stop offset="0" stop-color="#60b8f8"/><stop offset="1" stop-color="#2a88e0"/></linearGradient></defs><path d="M0.4 6.3 L4.6 1.3 L8.8 6.3 Z" fill="#fff" stroke="#555" stroke-width="1" stroke-linejoin="round"/><path d="M0.4 8.7 L4.6 13.4 L8.8 8.7 Z" fill="#fff" stroke="#555" stroke-width="1" stroke-linejoin="round"/></svg>
<svg style="position:absolute;left:183px;top:461px" width="16" height="16" viewBox="0 0 16 16"><path d="M3 0.5 H13 L15.5 3 V13 L13 15.5 H3 L0.5 13 V3 Z" fill="#d8d4ce" stroke="#3c3c3c" stroke-width="1"/><path d="M4.2 7.6 L7.2 11.6 L12.4 5.2" fill="none" stroke="#444" stroke-width="1.9"/></svg>
<div style="position:absolute;left:171px;top:478px;width:474px;height:21px;background:#ebebea"></div>
<div style="position:absolute;left:172px;top:478px;width:9px;height:20px;background:#fff"></div>
<div style="position:absolute;left:182px;top:478px;width:19px;height:20px;background:#fff"></div>
<div style="position:absolute;left:202px;top:478px;width:29px;height:20px;background:#fff"></div>
<div style="position:absolute;left:232px;top:478px;width:62px;height:20px;background:#fff"></div>
<div style="position:absolute;left:295px;top:478px;width:73px;height:20px;background:#fff"></div>
<div style="position:absolute;left:369px;top:478px;width:55px;height:20px;background:#fff"></div>
<div style="position:absolute;left:425px;top:478px;width:113px;height:20px;background:#fff"></div>
<div style="position:absolute;left:539px;top:478px;width:105px;height:20px;background:#fff"></div>
<div style="position:absolute;left:174px;top:480.15px;font-size:14.00px;line-height:16px;color:#000;white-space:nowrap;transform:scaleX(0.9286);transform-origin:0 0;">1</div>
<div style="position:absolute;left:185px;top:482px;width:12px;height:12px;background:#fff;box-shadow:inset 1px 1px 0 #808080, inset 2px 2px 0 #404040, inset -1px -1px 0 #fff, inset -2px -2px 0 #d4d0c8"></div>
<div style="position:absolute;left:203px;top:478.8px;line-height:0"><svg width="15" height="17" viewBox="0 0 15 17"><defs><radialGradient id="rg" cx="0.35" cy="0.3" r="0.8"><stop offset="0" stop-color="#ffd0d0"/><stop offset="0.3" stop-color="#e04040"/><stop offset="1" stop-color="#b01818"/></radialGradient></defs><path d="M2.2 15.9 C2.4 12.2 5.8 11.6 6.3 8.4 H9.7 C10.2 11.6 13.6 12.2 13.8 15.9 Z" fill="url(#rg)" stroke="#7a2010" stroke-width="0.7"/><circle cx="8" cy="5.3" r="3.7" fill="url(#rg)" stroke="#7a2010" stroke-width="0.7"/></svg></div>
<div style="position:absolute;left:234.4px;top:480.15px;font-size:14.00px;line-height:16px;color:#000;white-space:nowrap;transform:scaleX(0.9286);transform-origin:0 0;">Herr</div>
<div style="position:absolute;left:297.4px;top:480.15px;font-size:14.00px;line-height:16px;color:#000;white-space:nowrap;transform:scaleX(0.9286);transform-origin:0 0;">Michael</div>
<div style="position:absolute;left:371.4px;top:480.15px;font-size:14.00px;line-height:16px;color:#000;white-space:nowrap;transform:scaleX(0.9286);transform-origin:0 0;">Beikler</div>
<div style="position:absolute;left:427.4px;top:480.15px;font-size:14.00px;line-height:16px;color:#000;white-space:nowrap;transform:scaleX(0.9286);transform-origin:0 0;">0221 / 100 90 - 11</div>
<div style="position:absolute;left:541.4px;top:480.15px;font-size:14.00px;line-height:16px;color:#000;white-space:nowrap;transform:scaleX(0.9286);transform-origin:0 0;">0171 / 12 34 567</div>
<div style="position:absolute;left:171px;top:499px;width:474px;height:19px;background:#ebebea"></div>
<div style="position:absolute;left:172px;top:499px;width:9px;height:19px;background:#fcee94"></div>
<div style="position:absolute;left:182px;top:499px;width:19px;height:19px;background:#fcee94"></div>
<div style="position:absolute;left:202px;top:499px;width:29px;height:19px;background:#fcee94"></div>
<div style="position:absolute;left:232px;top:499px;width:62px;height:19px;background:#fcee94"></div>
<div style="position:absolute;left:295px;top:499px;width:73px;height:19px;background:#fcee94"></div>
<div style="position:absolute;left:369px;top:499px;width:55px;height:19px;background:#fcee94"></div>
<div style="position:absolute;left:425px;top:499px;width:113px;height:19px;background:#fcee94"></div>
<div style="position:absolute;left:539px;top:499px;width:105px;height:19px;background:#fcee94"></div>
<div style="position:absolute;left:174px;top:500.15px;font-size:14.00px;line-height:16px;color:#000;white-space:nowrap;transform:scaleX(0.9286);transform-origin:0 0;">2</div>
<div style="position:absolute;left:185px;top:503px;width:12px;height:12px;background:#fff;box-shadow:inset 1px 1px 0 #808080, inset 2px 2px 0 #404040, inset -1px -1px 0 #fff, inset -2px -2px 0 #d4d0c8"></div>
<div style="position:absolute;left:203px;top:499.8px;line-height:0"><svg width="15" height="17" viewBox="0 0 15 17"><defs><radialGradient id="rg" cx="0.35" cy="0.3" r="0.8"><stop offset="0" stop-color="#ffd0d0"/><stop offset="0.3" stop-color="#e04040"/><stop offset="1" stop-color="#b01818"/></radialGradient></defs><path d="M2.2 15.9 C2.4 12.2 5.8 11.6 6.3 8.4 H9.7 C10.2 11.6 13.6 12.2 13.8 15.9 Z" fill="url(#rg)" stroke="#7a2010" stroke-width="0.7"/><circle cx="8" cy="5.3" r="3.7" fill="url(#rg)" stroke="#7a2010" stroke-width="0.7"/></svg></div>
<div style="position:absolute;left:234.4px;top:500.15px;font-size:14.00px;line-height:16px;color:#000;white-space:nowrap;transform:scaleX(0.9286);transform-origin:0 0;">Herr</div>
<div style="position:absolute;left:297.4px;top:500.15px;font-size:14.00px;line-height:16px;color:#000;white-space:nowrap;transform:scaleX(0.9286);transform-origin:0 0;">Frank</div>
<div style="position:absolute;left:371.4px;top:500.15px;font-size:14.00px;line-height:16px;color:#000;white-space:nowrap;transform:scaleX(0.9286);transform-origin:0 0;">Tahler</div>
<div style="position:absolute;left:427.4px;top:500.15px;font-size:14.00px;line-height:16px;color:#000;white-space:nowrap;transform:scaleX(0.9286);transform-origin:0 0;">0221 / 100 90 - 12</div>
<div style="position:absolute;left:541.4px;top:500.15px;font-size:14.00px;line-height:16px;color:#000;white-space:nowrap;transform:scaleX(0.9286);transform-origin:0 0;">0171 / 12 34 568</div>
<svg style="position:absolute;left:286px;top:508px" width="20" height="24" viewBox="0 0 20 24"><path d="M5.5 2 L6.5 1 L7.5 1 L8.5 2 L8.5 6.5 L9.5 6 L10.5 6.5 L11.5 7 L12.5 7 L13.5 8 L14.5 8 L15.5 8.5 L17.5 9.5 L18.5 10.5 L18.5 16.5 L17 20.5 L16.5 22 L6.5 22 L6.5 20.5 L1.5 12.5 L1.5 10.5 L2.5 10 L4 10 L5.5 11.5 Z" fill="#fff" stroke="#000" stroke-width="1.1" stroke-linejoin="miter"/><path d="M8.5 6.5 V12 M11.5 7 V12 M14.5 8 V12" stroke="#000" stroke-width="1"/></svg>
</body></html>
